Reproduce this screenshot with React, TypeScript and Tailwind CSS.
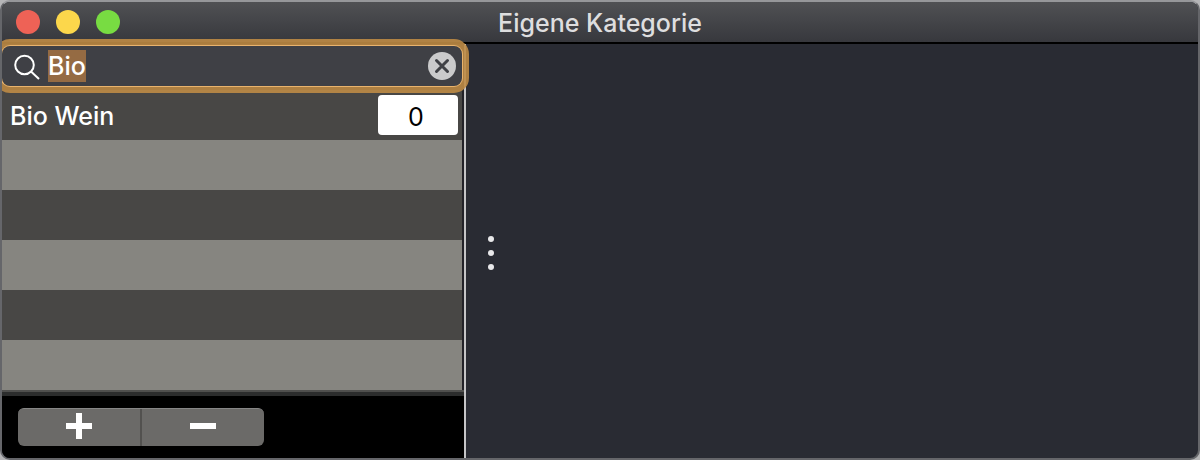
import React, { useEffect, useRef, useState } from 'react';

interface Category {
  id: string;
  name: string;
  count: number;
}

const categories: Category[] = [{ id: 'bio-wein', name: 'Bio Wein', count: 0 }];

const VISIBLE_ROWS = 6;

const TitleBar: React.FC<{ title: string }> = ({ title }) => (
  <header className="grid h-[42px] shrink-0 grid-cols-[1fr_auto_1fr] items-center border-b-2 border-black bg-linear-to-b from-[#505154] to-[#37383d] px-3.5">
    <div className="flex gap-4">
      <button type="button" aria-label="Schließen" className="size-6 rounded-full bg-[#ee6256]" />
      <button type="button" aria-label="Minimieren" className="size-6 rounded-full bg-[#fcd74b]" />
      <button type="button" aria-label="Vergrößern" className="size-6 rounded-full bg-[#78dc42]" />
    </div>
    <h1 className="pt-0.5 text-[25px] leading-8 font-medium text-[#dededf]">{title}</h1>
  </header>
);

interface SearchFieldProps {
  value: string;
  onChange: (value: string) => void;
}

const SearchField: React.FC<SearchFieldProps> = ({ value, onChange }) => {
  const inputRef = useRef<HTMLInputElement>(null);

  useEffect(() => {
    inputRef.current?.focus();
    inputRef.current?.select();
  }, []);

  return (
    <div className="relative z-10 flex h-10 items-center rounded-lg bg-[#3f4045] pr-1.5 pl-2.5 shadow-[0_0_0_1px_#e9b36d,0_0_0_7px_#be8b45e6]">
      <label htmlFor="search" aria-label="Suchen" className="shrink-0">
        <svg viewBox="0 0 28 28" className="size-7" fill="none" stroke="#fff" strokeWidth="2">
          <circle cx="12.5" cy="13" r="9.3" />
          <path d="M19 19.5 L27 27" />
        </svg>
      </label>
      <input
        id="search"
        ref={inputRef}
        type="text"
        value={value}
        onChange={(e) => onChange(e.target.value)}
        className="ml-2 h-8 min-w-0 flex-1 bg-transparent text-[25px] leading-8 font-medium text-white outline-none selection:bg-[#956b43] selection:text-white"
      />
      <button type="button" aria-label="Suche löschen" onClick={() => onChange('')} className="shrink-0">
        <svg viewBox="0 0 28 28" className="size-7">
          <circle cx="14" cy="14" r="14" fill="#cacacb" />
          <path d="M8.5 8.5 L19.5 19.5 M19.5 8.5 L8.5 19.5" stroke="#3f4045" strokeWidth="3" strokeLinecap="round" />
        </svg>
      </button>
    </div>
  );
};

const CategoryRow: React.FC<{ category?: Category }> = ({ category }) => (
  <li className="flex h-[50px] items-center justify-between pr-1 pl-2 odd:bg-[#484745] even:bg-[#868580]">
    {category && (
      <>
        <label htmlFor={category.id} className="pt-0.5 text-[25px] leading-8 font-medium text-white">
          {category.name}
        </label>
        <input
          id={category.id}
          type="text"
          defaultValue={category.count}
          className="h-10 w-20 rounded-sm bg-white pt-1 pr-1 text-center text-[25px] text-black outline-none"
        />
      </>
    )}
  </li>
);

const Toolbar: React.FC = () => (
  <div className="flex flex-1 items-start bg-black px-4 py-3">
    <div className="flex h-[38px] overflow-hidden rounded-md border-t border-[#868686] bg-[#6b6a68]">
      <button
        type="button"
        aria-label="Hinzufügen"
        className="flex w-[124px] items-center justify-center border-r-2 border-[#52514f] pb-1"
      >
        <svg viewBox="0 0 26 26" className="size-[26px]" fill="none" stroke="#fff" strokeWidth="6">
          <path d="M13 0 V26 M0 13 H26" />
        </svg>
      </button>
      <button type="button" aria-label="Entfernen" className="flex w-[122px] items-center justify-center pb-1">
        <svg viewBox="0 0 26 26" className="size-[26px]" fill="none" stroke="#fff" strokeWidth="6">
          <path d="M0 13 H26" />
        </svg>
      </button>
    </div>
  </div>
);

const App: React.FC = () => {
  const [query, setQuery] = useState('Bio');
  const matches = categories.filter((c) => c.name.toLowerCase().includes(query.toLowerCase()));
  const rows = Array.from({ length: VISIBLE_ROWS }, (_, i) => matches[i]);

  return (
    <div className="bg-[#b5b5b7] font-['Inter',sans-serif]">
      <div className="flex min-h-screen flex-col overflow-hidden rounded-[10px] border-2 border-[#65666a] border-t-[#96979a] bg-[#292b33]">
        <TitleBar title="Eigene Kategorie" />
        <div className="flex flex-1">
          <aside className="flex w-[464px] shrink-0 flex-col border-r-2 border-[#c5c5c7] bg-[#222228]">
            <div className="pt-0.5 pr-0.5 pb-1">
              <SearchField value={query} onChange={setQuery} />
            </div>
            <ul className="mr-0.5">
              {rows.map((category, i) => (
                <CategoryRow key={i} category={category} />
              ))}
            </ul>
            <div className="h-1.5 shrink-0 border-t-2 border-[#50504e] bg-[#2c2d2d]" />
            <Toolbar />
          </aside>
          <main className="flex flex-1 items-center px-5 pt-1">
            <button type="button" aria-label="Mehr">
              <svg viewBox="0 0 10 34" className="h-[34px] w-2.5" fill="#e8e8ea">
                <circle cx="5" cy="3" r="3" />
                <circle cx="5" cy="17" r="3" />
                <circle cx="5" cy="31" r="3" />
              </svg>
            </button>
          </main>
        </div>
      </div>
    </div>
  );
};

export default App;
